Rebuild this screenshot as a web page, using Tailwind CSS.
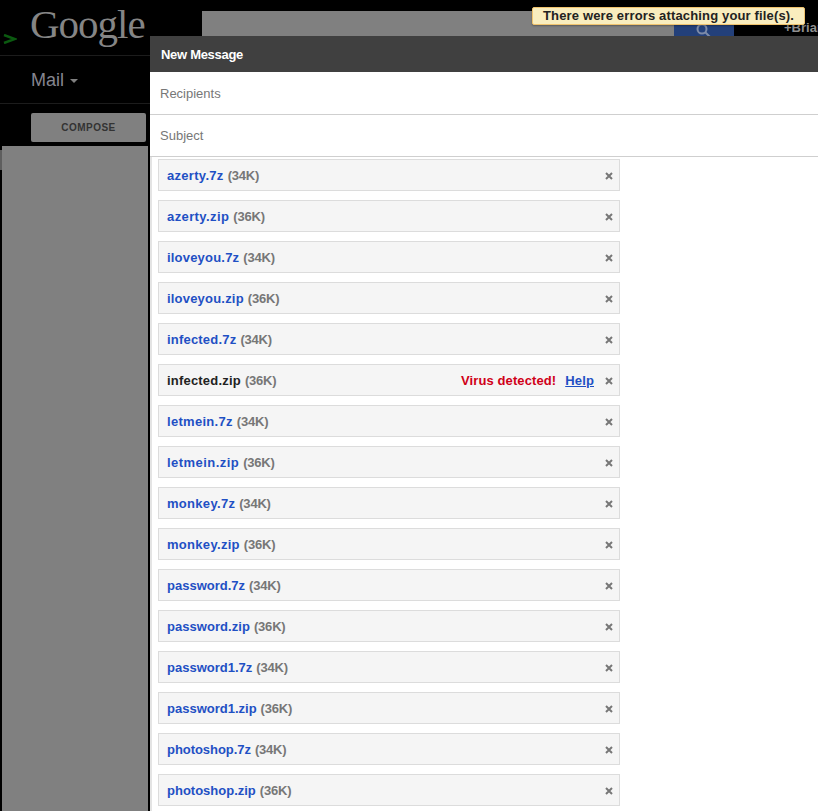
<!DOCTYPE html>
<html><head><meta charset="utf-8">
<script src="https://cdn.jsdelivr.net/npm/@tailwindcss/browser@4"></script>
<title>Gmail</title></head>
<body class="m-0">
<div class="relative w-[818px] h-[811px] overflow-hidden bg-black font-['Liberation_Sans',Arial,sans-serif]">
  <!-- top bar -->
  <div class="flex h-[55px]">
    <div class="relative w-[202px] shrink-0">
      <svg class="absolute left-[3px] top-[34px]" width="14" height="10" viewBox="0 0 14 10" fill="none" stroke="#0b5a10" stroke-width="2.5"><path d="M1 1L12 5L1 9"/></svg>
      <span class="absolute left-[30px] top-[1px] font-['Liberation_Serif',serif] text-[41px] leading-[46px] tracking-[-1px] text-[#858585]">Google</span>
    </div>
    <div class="w-[472px] h-[25px] mt-[11px] shrink-0 bg-[#808080]"></div>
    <div class="flex justify-center w-[60px] h-[25px] mt-[11px] shrink-0 bg-[#23407a]">
      <svg class="mt-[12px]" width="16" height="16" viewBox="0 0 16 16" fill="none" stroke="#7d8ba8" stroke-width="2"><circle cx="6" cy="6" r="4.5"/><path d="M9.5 9.5L15 15"/></svg>
    </div>
    <div class="ml-[50px] mt-[19px] shrink-0 text-[13px] leading-[18px] font-bold text-[#8f8f8f] whitespace-nowrap">+Brian</div>
  </div>
  <!-- left nav -->
  <div class="w-[150px]">
    <div class="h-[49px] border-t border-b border-[#1c1c1c] pl-[31px] flex items-center gap-[6px]">
      <span class="text-[18px] text-[#85858f] leading-[22px]">Mail</span>
      <span class="mt-[2px] w-0 h-0 border-x-[4px] border-x-transparent border-t-[4px] border-t-[#808080]"></span>
    </div>
    <div class="pl-[31px] pt-[9px] pr-[4px]">
      <div class="w-[115px] h-[29px] rounded-[2px] bg-[#808080] flex items-center justify-center text-[10px] font-bold tracking-[0.45px] text-[#333333]">COMPOSE</div>
    </div>
    <div class="ml-[2px] mt-[4px] w-[146px] h-[665px] bg-[#808080]"></div>
  </div>
  <div class="absolute left-0 top-[150px] w-[2px] h-[20px] bg-[#5e5e5e]"></div>
  <!-- compose window -->
  <div class="absolute left-[150px] top-[36px] w-[668px] h-[775px] bg-white">
    <div class="h-[36px] bg-[#404040] pl-[11px] pt-[1px] flex items-center text-[13px] font-bold tracking-[-0.3px] text-white">New Message</div>
    <div class="h-[43px] border-b border-[#cfcfcf] pl-[10px] pt-[2px] flex items-center text-[13px] text-[#777777]">Recipients</div>
    <div class="h-[42px] border-b border-[#cfcfcf] pl-[10px] flex items-center text-[13px] text-[#777777]">Subject</div>
    <div class="flex flex-col gap-[9px] pt-[2px] pl-[6px] border-l-[2px] border-[#e4e4e4] h-[654px]">
      <div class="flex items-center h-[32px] w-[462px] shrink-0 bg-[#f5f5f5] border border-[#dcdcdc] pl-[8px] pr-[6px] pt-[2px] text-[13px] font-bold"><span class="tracking-[0.3px] text-[#1f50c4]">azerty.7z</span><span class="ml-[4px] tracking-[-0.2px] text-[#777777]">(34K)</span><svg class="ml-auto" width="8" height="8" viewBox="0 0 8 8" fill="none" stroke="#777777" stroke-width="2"><path d="M1 1L7 7M7 1L1 7"/></svg></div>
      <div class="flex items-center h-[32px] w-[462px] shrink-0 bg-[#f5f5f5] border border-[#dcdcdc] pl-[8px] pr-[6px] pt-[2px] text-[13px] font-bold"><span class="tracking-[0.4px] text-[#1f50c4]">azerty.zip</span><span class="ml-[4px] tracking-[-0.2px] text-[#777777]">(36K)</span><svg class="ml-auto" width="8" height="8" viewBox="0 0 8 8" fill="none" stroke="#777777" stroke-width="2"><path d="M1 1L7 7M7 1L1 7"/></svg></div>
      <div class="flex items-center h-[32px] w-[462px] shrink-0 bg-[#f5f5f5] border border-[#dcdcdc] pl-[8px] pr-[6px] pt-[2px] text-[13px] font-bold"><span class="tracking-[0.2px] text-[#1f50c4]">iloveyou.7z</span><span class="ml-[4px] tracking-[-0.2px] text-[#777777]">(34K)</span><svg class="ml-auto" width="8" height="8" viewBox="0 0 8 8" fill="none" stroke="#777777" stroke-width="2"><path d="M1 1L7 7M7 1L1 7"/></svg></div>
      <div class="flex items-center h-[32px] w-[462px] shrink-0 bg-[#f5f5f5] border border-[#dcdcdc] pl-[8px] pr-[6px] pt-[2px] text-[13px] font-bold"><span class="tracking-[0.2px] text-[#1f50c4]">iloveyou.zip</span><span class="ml-[4px] tracking-[-0.2px] text-[#777777]">(36K)</span><svg class="ml-auto" width="8" height="8" viewBox="0 0 8 8" fill="none" stroke="#777777" stroke-width="2"><path d="M1 1L7 7M7 1L1 7"/></svg></div>
      <div class="flex items-center h-[32px] w-[462px] shrink-0 bg-[#f5f5f5] border border-[#dcdcdc] pl-[8px] pr-[6px] pt-[2px] text-[13px] font-bold"><span class="tracking-[0.2px] text-[#1f50c4]">infected.7z</span><span class="ml-[4px] tracking-[-0.2px] text-[#777777]">(34K)</span><svg class="ml-auto" width="8" height="8" viewBox="0 0 8 8" fill="none" stroke="#777777" stroke-width="2"><path d="M1 1L7 7M7 1L1 7"/></svg></div>
      <div class="flex items-center h-[32px] w-[462px] shrink-0 bg-[#f5f5f5] border border-[#dcdcdc] pl-[8px] pr-[6px] pt-[2px] text-[13px] font-bold"><span class="tracking-[0.2px] text-[#222222]">infected.zip</span><span class="ml-[4px] tracking-[-0.2px] text-[#777777]">(36K)</span><span class="ml-auto tracking-[0.1px] text-[#d00018]">Virus detected!</span><span class="ml-[9px] mr-[11px] tracking-[0.15px] text-[#1f50c4] underline">Help</span><svg width="8" height="8" viewBox="0 0 8 8" fill="none" stroke="#777777" stroke-width="2"><path d="M1 1L7 7M7 1L1 7"/></svg></div>
      <div class="flex items-center h-[32px] w-[462px] shrink-0 bg-[#f5f5f5] border border-[#dcdcdc] pl-[8px] pr-[6px] pt-[2px] text-[13px] font-bold"><span class="tracking-[0.3px] text-[#1f50c4]">letmein.7z</span><span class="ml-[4px] tracking-[-0.2px] text-[#777777]">(34K)</span><svg class="ml-auto" width="8" height="8" viewBox="0 0 8 8" fill="none" stroke="#777777" stroke-width="2"><path d="M1 1L7 7M7 1L1 7"/></svg></div>
      <div class="flex items-center h-[32px] w-[462px] shrink-0 bg-[#f5f5f5] border border-[#dcdcdc] pl-[8px] pr-[6px] pt-[2px] text-[13px] font-bold"><span class="tracking-[0.45px] text-[#1f50c4]">letmein.zip</span><span class="ml-[4px] tracking-[-0.2px] text-[#777777]">(36K)</span><svg class="ml-auto" width="8" height="8" viewBox="0 0 8 8" fill="none" stroke="#777777" stroke-width="2"><path d="M1 1L7 7M7 1L1 7"/></svg></div>
      <div class="flex items-center h-[32px] w-[462px] shrink-0 bg-[#f5f5f5] border border-[#dcdcdc] pl-[8px] pr-[6px] pt-[2px] text-[13px] font-bold"><span class="tracking-[0.3px] text-[#1f50c4]">monkey.7z</span><span class="ml-[4px] tracking-[-0.2px] text-[#777777]">(34K)</span><svg class="ml-auto" width="8" height="8" viewBox="0 0 8 8" fill="none" stroke="#777777" stroke-width="2"><path d="M1 1L7 7M7 1L1 7"/></svg></div>
      <div class="flex items-center h-[32px] w-[462px] shrink-0 bg-[#f5f5f5] border border-[#dcdcdc] pl-[8px] pr-[6px] pt-[2px] text-[13px] font-bold"><span class="tracking-[0.3px] text-[#1f50c4]">monkey.zip</span><span class="ml-[4px] tracking-[-0.2px] text-[#777777]">(36K)</span><svg class="ml-auto" width="8" height="8" viewBox="0 0 8 8" fill="none" stroke="#777777" stroke-width="2"><path d="M1 1L7 7M7 1L1 7"/></svg></div>
      <div class="flex items-center h-[32px] w-[462px] shrink-0 bg-[#f5f5f5] border border-[#dcdcdc] pl-[8px] pr-[6px] pt-[2px] text-[13px] font-bold"><span class="text-[#1f50c4]">password.7z</span><span class="ml-[4px] tracking-[-0.2px] text-[#777777]">(34K)</span><svg class="ml-auto" width="8" height="8" viewBox="0 0 8 8" fill="none" stroke="#777777" stroke-width="2"><path d="M1 1L7 7M7 1L1 7"/></svg></div>
      <div class="flex items-center h-[32px] w-[462px] shrink-0 bg-[#f5f5f5] border border-[#dcdcdc] pl-[8px] pr-[6px] pt-[2px] text-[13px] font-bold"><span class="tracking-[0.05px] text-[#1f50c4]">password.zip</span><span class="ml-[4px] tracking-[-0.2px] text-[#777777]">(36K)</span><svg class="ml-auto" width="8" height="8" viewBox="0 0 8 8" fill="none" stroke="#777777" stroke-width="2"><path d="M1 1L7 7M7 1L1 7"/></svg></div>
      <div class="flex items-center h-[32px] w-[462px] shrink-0 bg-[#f5f5f5] border border-[#dcdcdc] pl-[8px] pr-[6px] pt-[2px] text-[13px] font-bold"><span class="text-[#1f50c4]">password1.7z</span><span class="ml-[4px] tracking-[-0.2px] text-[#777777]">(34K)</span><svg class="ml-auto" width="8" height="8" viewBox="0 0 8 8" fill="none" stroke="#777777" stroke-width="2"><path d="M1 1L7 7M7 1L1 7"/></svg></div>
      <div class="flex items-center h-[32px] w-[462px] shrink-0 bg-[#f5f5f5] border border-[#dcdcdc] pl-[8px] pr-[6px] pt-[2px] text-[13px] font-bold"><span class="text-[#1f50c4]">password1.zip</span><span class="ml-[4px] tracking-[-0.2px] text-[#777777]">(36K)</span><svg class="ml-auto" width="8" height="8" viewBox="0 0 8 8" fill="none" stroke="#777777" stroke-width="2"><path d="M1 1L7 7M7 1L1 7"/></svg></div>
      <div class="flex items-center h-[32px] w-[462px] shrink-0 bg-[#f5f5f5] border border-[#dcdcdc] pl-[8px] pr-[6px] pt-[2px] text-[13px] font-bold"><span class="tracking-[-0.05px] text-[#1f50c4]">photoshop.7z</span><span class="ml-[4px] tracking-[-0.2px] text-[#777777]">(34K)</span><svg class="ml-auto" width="8" height="8" viewBox="0 0 8 8" fill="none" stroke="#777777" stroke-width="2"><path d="M1 1L7 7M7 1L1 7"/></svg></div>
      <div class="flex items-center h-[32px] w-[462px] shrink-0 bg-[#f5f5f5] border border-[#dcdcdc] pl-[8px] pr-[6px] pt-[2px] text-[13px] font-bold"><span class="text-[#1f50c4]">photoshop.zip</span><span class="ml-[4px] tracking-[-0.2px] text-[#777777]">(36K)</span><svg class="ml-auto" width="8" height="8" viewBox="0 0 8 8" fill="none" stroke="#777777" stroke-width="2"><path d="M1 1L7 7M7 1L1 7"/></svg></div>
    </div>
  </div>
  <!-- notification -->
  <div class="absolute left-[532px] top-[7px] w-[273px] h-[18px] bg-[#f9edbe] border border-[#f0c36d] rounded-[2px] shadow-[0_1px_2px_rgba(0,0,0,0.3)] flex items-center justify-center text-[13px] font-bold tracking-[0.15px] text-[#222222] whitespace-nowrap">There were errors attaching your file(s).</div>
</div>
</body></html>
